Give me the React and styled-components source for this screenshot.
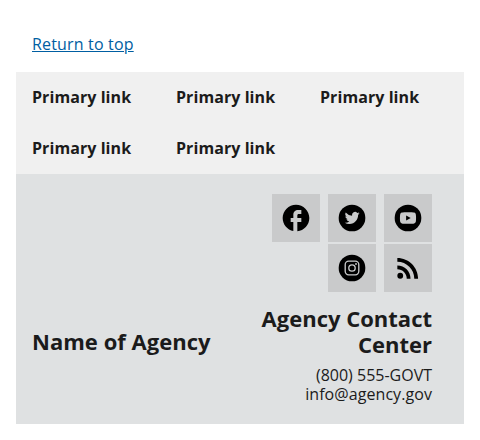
import React from "react";
import styled, { createGlobalStyle } from "styled-components";

const Global = createGlobalStyle`
  * { box-sizing: border-box; }
  body { margin: 0; background: #fff; color: #1b1b1b; font-family: "Open Sans", sans-serif; }
`;
const Page = styled.div`
  padding: 16px;
`;
const ReturnBar = styled.div`
  padding: 20px 16px;
  font-size: 16px;
  line-height: 16px;
`;
const ReturnLink = styled.a`
  color: #005ea2;
  letter-spacing: 0.17px;
  text-decoration: underline;
`;
const Nav = styled.nav`
  display: grid;
  grid-template-columns: repeat(3, 144px);
  padding: 0 16px;
  background: #f0f0f0;
`;
const NavLink = styled.a`
  height: 51px;
  padding-top: 16px;
  font-size: 16px;
  line-height: 18px;
  font-weight: 700;
  letter-spacing: 0.07px;
`;
const Secondary = styled.section`
  display: flex;
  align-items: center;
  height: 250px;
  padding: 20px 32px 20px 16px;
  background: #dfe1e2;
`;
const AgencyName = styled.h3`
  flex: 1;
  margin: 0;
  padding-top: 84px;
  font-size: 22px;
  line-height: 26px;
  letter-spacing: 0.03px;
`;
const Contact = styled.div`
  width: 184px;
  text-align: right;
`;
const Socials = styled.div`
  display: flex;
  flex-wrap: wrap;
  justify-content: flex-end;
  gap: 2px 8px;
`;
const SocialLink = styled.a`
  display: flex;
  align-items: center;
  justify-content: center;
  width: 48px;
  height: 48px;
  background: #c9cacb;
`;
const Icon = styled.svg`
  width: 32px;
  height: 32px;
  fill: #000;
`;
const ContactHeading = styled.h3`
  margin: 13px 0 9px;
  font-size: 22px;
  line-height: 26px;
`;
const ContactLine = styled.div`
  font-size: 16px;
  line-height: 19px;
  letter-spacing: ${(p) => p.$tracking || "normal"};
`;

const cutout = "#c9cacb";
const icons = [
  ["Facebook", <path d="M22 12c0-5.520-4.480-10-10-10S2 6.480 2 12c0 4.840 3.440 8.870 8 9.800V15H8v-3h2V9.500C10 7.570 11.570 6 13.500 6H16v3h-2c-.55 0-1 .45-1 1v2h3v3h-3v6.950c5.050-.5 9-4.760 9-9.950z" />],
  ["Twitter", (
    <>
      <circle cx="12" cy="12" r="10" />
      <path fill={cutout} d="M16.570 9.700c.005.100.007.200.007.297 0 3.030-2.307 6.524-6.524 6.524a6.490 6.490 0 0 1-3.515-1.030 4.600 4.600 0 0 0 3.394-.950 2.294 2.294 0 0 1-2.142-1.592c.345.066.700.053 1.036-.039a2.293 2.293 0 0 1-1.840-2.248v-.029c.310.172.664.276 1.040.287a2.290 2.290 0 0 1-.710-3.061 6.508 6.508 0 0 0 4.727 2.396 2.293 2.293 0 0 1 3.907-2.091 4.590 4.590 0 0 0 1.456-.556 2.300 2.300 0 0 1-1.008 1.268 4.580 4.580 0 0 0 1.317-.361 4.660 4.660 0 0 1-1.145 1.187z" />
    </>
  )],
  ["YouTube", (
    <>
      <circle cx="12" cy="12" r="10" />
      <path fill={cutout} d="M7.400 7.900c1.200-.35 8-.35 9.200 0 .7.200 1.100.6 1.250 1.200.25 1.200.25 4.600 0 5.800-.15.600-.55 1-1.250 1.200-1.200.35-8 .35-9.200 0-.7-.2-1.100-.6-1.250-1.200-.25-1.200-.25-4.600 0-5.800.15-.6.55-1 1.250-1.200z" />
      <path d="M10.600 10.050v3.900L14 12z" />
    </>
  )],
  ["Instagram", (
    <>
      <circle cx="12" cy="12" r="10" />
      <g fill="none" stroke={cutout}>
        <rect x="6.900" y="6.900" width="10.200" height="10.200" rx="2.600" />
        <circle cx="12" cy="12" r="2.400" />
      </g>
      <circle cx="15" cy="9" r=".7" fill={cutout} />
    </>
  )],
  ["RSS", <path d="M6.180 15.640a2.180 2.180 0 1 0 0 4.360 2.180 2.180 0 0 0 0-4.360zM4 4.440v2.830c7.030 0 12.730 5.700 12.730 12.730h2.830c0-8.590-6.970-15.560-15.560-15.560zM4 10.100v2.830c3.900 0 7.070 3.170 7.070 7.070h2.830c0-5.470-4.430-9.900-9.900-9.900z" />],
];
const primaryLinks = Array(5).fill("Primary link");

export default function App() {
  return (
    <Page>
      <Global />
      <ReturnBar><ReturnLink href="#">Return to top</ReturnLink></ReturnBar>
      <Nav>{primaryLinks.map((label, i) => <NavLink key={i}>{label}</NavLink>)}</Nav>
      <Secondary>
        <AgencyName>Name of Agency</AgencyName>
        <Contact>
          <Socials>
            {icons.map(([name, drawing]) => (
              <SocialLink key={name} aria-label={name}>
                <Icon viewBox="0 0 24 24">{drawing}</Icon>
              </SocialLink>
            ))}
          </Socials>
          <ContactHeading>Agency Contact Center</ContactHeading>
          <ContactLine>(800) 555-GOVT</ContactLine>
          <ContactLine $tracking="0.07px">info@agency.gov</ContactLine>
        </Contact>
      </Secondary>
    </Page>
  );
}
